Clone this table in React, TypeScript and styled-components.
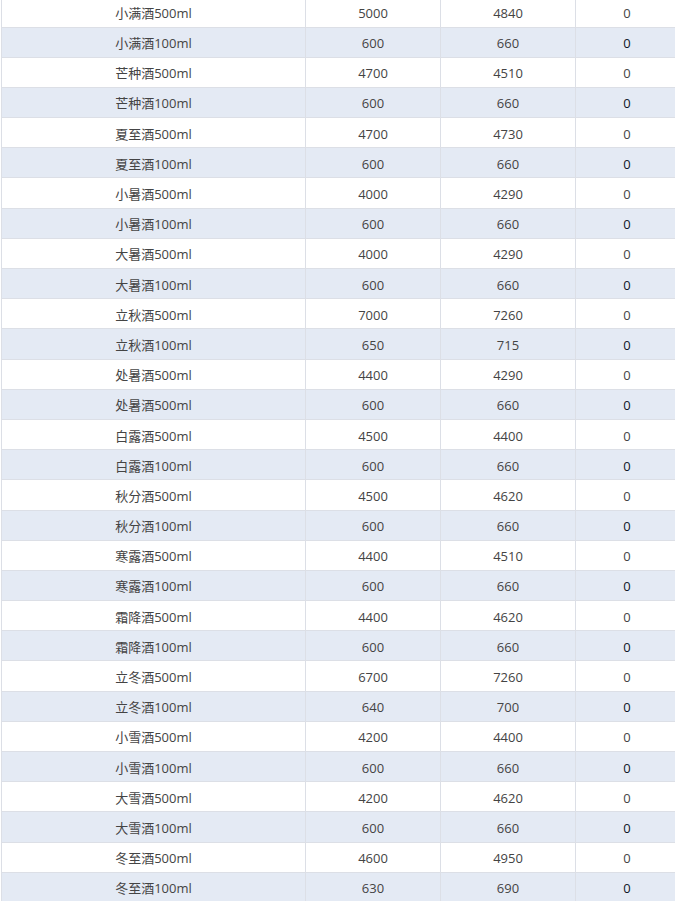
import React from "react";
import styled, { createGlobalStyle } from "styled-components";

const Global = createGlobalStyle`
  html, body {
    margin: 0;
    padding: 0;
    background: #ffffff;
    overflow: hidden;
  }
  body {
    font-family: "Open Sans", "Noto Sans CJK SC", sans-serif;
  }
`;

const Viewport = styled.div`
  width: 675px;
  height: 901px;
  overflow: hidden;
  padding-left: 1px;
  box-sizing: border-box;
`;

const Table = styled.table`
  margin-top: -3.2px;
  width: 678px;
  table-layout: fixed;
  border-collapse: collapse;
  border-left: 1px solid #dcdfe6;
  font-size: 13px;
  color: #444444;
`;

const Col = styled.col<{ $w: number }>`
  width: ${(p) => p.$w}px;
`;

const Row = styled.tr<{ $stripe: boolean }>`
  height: 30.2px;
  background: ${(p) => (p.$stripe ? "#e4eaf4" : "#ffffff")};
  border-bottom: 1px solid #dcdfe6;
`;

const Cell = styled.td<{ $strong?: boolean }>`
  padding: 2px 8px 0;
  text-align: center;
  vertical-align: middle;
  border-right: 1px solid #dcdfe6;
  line-height: 18px;
  white-space: nowrap;
  color: ${(p) => (p.$strong ? "#0f1626" : "#444444")};
`;

const rows: [string, number, number, number][] = [
  ["小满酒500ml", 5000, 4840, 0],
  ["小满酒100ml", 600, 660, 0],
  ["芒种酒500ml", 4700, 4510, 0],
  ["芒种酒100ml", 600, 660, 0],
  ["夏至酒500ml", 4700, 4730, 0],
  ["夏至酒100ml", 600, 660, 0],
  ["小暑酒500ml", 4000, 4290, 0],
  ["小暑酒100ml", 600, 660, 0],
  ["大暑酒500ml", 4000, 4290, 0],
  ["大暑酒100ml", 600, 660, 0],
  ["立秋酒500ml", 7000, 7260, 0],
  ["立秋酒100ml", 650, 715, 0],
  ["处暑酒500ml", 4400, 4290, 0],
  ["处暑酒500ml", 600, 660, 0],
  ["白露酒500ml", 4500, 4400, 0],
  ["白露酒100ml", 600, 660, 0],
  ["秋分酒500ml", 4500, 4620, 0],
  ["秋分酒100ml", 600, 660, 0],
  ["寒露酒500ml", 4400, 4510, 0],
  ["寒露酒100ml", 600, 660, 0],
  ["霜降酒500ml", 4400, 4620, 0],
  ["霜降酒100ml", 600, 660, 0],
  ["立冬酒500ml", 6700, 7260, 0],
  ["立冬酒100ml", 640, 700, 0],
  ["小雪酒500ml", 4200, 4400, 0],
  ["小雪酒100ml", 600, 660, 0],
  ["大雪酒500ml", 4200, 4620, 0],
  ["大雪酒100ml", 600, 660, 0],
  ["冬至酒500ml", 4600, 4950, 0],
  ["冬至酒100ml", 630, 690, 0],
];

const widths = [304, 135, 135, 103];

export default function App() {
  return (
    <>
      <Global />
      <Viewport>
        <Table>
          <colgroup>
            {widths.map((w, i) => (
              <Col key={i} $w={w} />
            ))}
          </colgroup>
          <tbody>
            {rows.map((r, i) => {
              const stripe = i % 2 === 1;
              return (
                <Row key={i} $stripe={stripe}>
                  <Cell>{r[0]}</Cell>
                  <Cell>{r[1]}</Cell>
                  <Cell>{r[2]}</Cell>
                  <Cell $strong={stripe}>{r[3]}</Cell>
                </Row>
              );
            })}
          </tbody>
        </Table>
      </Viewport>
    </>
  );
}
